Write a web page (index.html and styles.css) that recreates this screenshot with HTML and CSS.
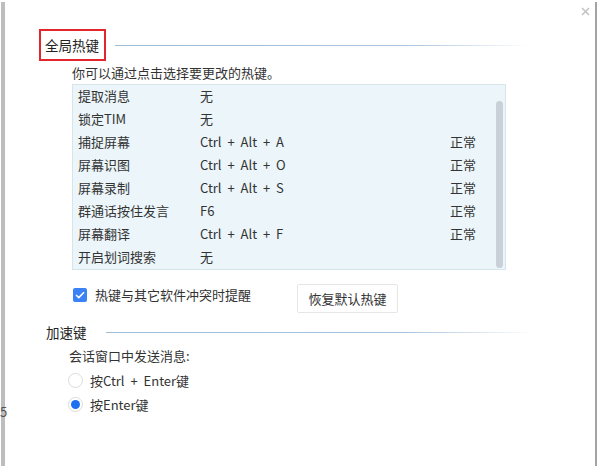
FILE: index.html
```html
<!DOCTYPE html>
<html lang="zh-CN">
<head>
    <meta charset="UTF-8">
    <title>热键设置</title>
    <link rel="stylesheet" href="styles.css">
</head>
<body>
    <div class="window">
        <span class="close">
            <svg width="9" height="9" viewBox="0 0 9 9"><path d="M1 1L8 8M8 1L1 8" stroke="#c4c4c4" stroke-width="1.6"/></svg>
        </span>
        <span class="cut-glyph">5</span>
        <div class="content">
            <div class="section-head">
                <span class="section-title marked">全局热键</span>
                <span class="section-line"></span>
            </div>
            <div class="indent">
                <p class="hint">你可以通过点击选择要更改的热键。</p>
                <div class="hotkey-list">
                    <div class="rows">
                        <div class="row"><span class="c-name">提取消息</span><span class="c-key">无</span><span class="c-state"></span></div>
                        <div class="row"><span class="c-name">锁定TIM</span><span class="c-key">无</span><span class="c-state"></span></div>
                        <div class="row"><span class="c-name">捕捉屏幕</span><span class="c-key">Ctrl + Alt + A</span><span class="c-state">正常</span></div>
                        <div class="row"><span class="c-name">屏幕识图</span><span class="c-key">Ctrl + Alt + O</span><span class="c-state">正常</span></div>
                        <div class="row"><span class="c-name">屏幕录制</span><span class="c-key">Ctrl + Alt + S</span><span class="c-state">正常</span></div>
                        <div class="row"><span class="c-name">群通话按住发言</span><span class="c-key">F6</span><span class="c-state">正常</span></div>
                        <div class="row"><span class="c-name">屏幕翻译</span><span class="c-key">Ctrl + Alt + F</span><span class="c-state">正常</span></div>
                        <div class="row"><span class="c-name">开启划词搜索</span><span class="c-key">无</span><span class="c-state"></span></div>
                    </div>
                    <div class="scroll-thumb"></div>
                </div>
                <div class="options">
                    <label class="check">
                        <span class="check-box">
                            <svg width="10" height="8" viewBox="0 0 10 8"><path d="M1 4L3.8 6.6L9 1.2" fill="none" stroke="#fff" stroke-width="1.5"/></svg>
                        </span>
                        热键与其它软件冲突时提醒
                    </label>
                    <button class="reset-btn">恢复默认热键</button>
                </div>
            </div>
            <div class="section-head second">
                <span class="section-title">加速键</span>
                <span class="section-line"></span>
            </div>
            <div class="send-block">
                <p class="send-label">会话窗口中发送消息:</p>
                <div class="radio-row"><span class="radio"></span>按Ctrl + Enter键</div>
                <div class="radio-row"><span class="radio on"></span>按Enter键</div>
            </div>
        </div>
    </div>
</body>
</html>
```

FILE: styles.css
```css
body {
    margin: 0;
    background-color: #fff;
    font-family: "Noto Sans CJK SC", sans-serif;
    font-size: 13px;
    color: #333;
}
.window {
    position: relative;
    margin: 2px 3px 0 1px;
    height: 464px;
    box-sizing: border-box;
    border-left: 4px solid #bdbdbd;
    border-right: 2px solid #a3a3a3;
}
.close {
    position: absolute;
    top: 5px;
    right: 5px;
    line-height: 0;
}
.cut-glyph {
    position: absolute;
    left: -5px;
    top: 400px;
    font-size: 13px;
    color: #555;
}
.content {
    padding: 27px 0 0 34px;
}
.section-head {
    display: flex;
    align-items: center;
    height: 32px;
}
.section-title {
    border: 2px solid transparent;
    padding: 0 5px 0 4px;
    line-height: 28px;
    font-size: 13.5px;
    color: #222;
}
.section-title.marked {
    border-color: #e3262c;
}
.section-line {
    width: 415px;
    height: 1px;
    margin-left: 9px;
    background: linear-gradient(to right, #9fbcd8 0%, #a9c3dc 70%, rgba(255, 255, 255, 0) 100%);
}
.section-head.second {
    height: 20px;
    margin-top: 9px;
}
.section-head.second .section-title {
    padding-left: 5px;
    line-height: 16px;
}
.section-head.second .section-line {
    margin-left: 12px;
    width: 428px;
}
.indent {
    margin-left: 33px;
}
.hint {
    margin: 3px 0 0;
    line-height: 18px;
}
.hotkey-list {
    display: flex;
    width: 434px;
    height: 186px;
    box-sizing: border-box;
    margin-top: 2px;
    background-color: #ebf5fa;
    border: 1px solid #d6e4ec;
}
.rows {
    flex: 1;
}
.row {
    display: flex;
    height: 23px;
    line-height: 22px;
    padding-left: 5px;
}
.c-name {
    width: 122px;
}
.c-key {
    width: 250px;
    word-spacing: 3px;
}
.scroll-thumb {
    width: 7px;
    margin: 16px 2px 1px 0;
    border-radius: 4px;
    background-color: #c9d0d7;
}
.options {
    display: flex;
    align-items: flex-start;
    margin-top: 14px;
}
.check {
    display: flex;
    align-items: center;
    gap: 8px;
    line-height: 22px;
    margin-left: 1px;
}
.check-box {
    display: flex;
    align-items: center;
    justify-content: center;
    width: 14px;
    height: 14px;
    border-radius: 2px;
    background-color: #3b82f6;
}
.reset-btn {
    width: 101px;
    height: 29px;
    margin-left: 46px;
    padding: 0;
    font-family: inherit;
    font-size: 13px;
    color: #333;
    background-color: #fff;
    border: 1px solid #e6e6e6;
    border-radius: 2px;
}
.send-block {
    margin-left: 30px;
    margin-top: 2px;
}
.send-label {
    margin: 0;
    line-height: 24px;
}
.radio-row {
    display: flex;
    align-items: center;
    gap: 7px;
    height: 24px;
    margin-left: -1px;
    word-spacing: 3px;
}
.radio {
    width: 13px;
    height: 13px;
    border-radius: 50%;
    border: 1px solid #dcdcdc;
    background-color: #fff;
    box-sizing: content-box;
    display: flex;
    align-items: center;
    justify-content: center;
}
.radio.on::after {
    content: "";
    width: 9px;
    height: 9px;
    border-radius: 50%;
    background-color: #1f6ff2;
}
```
